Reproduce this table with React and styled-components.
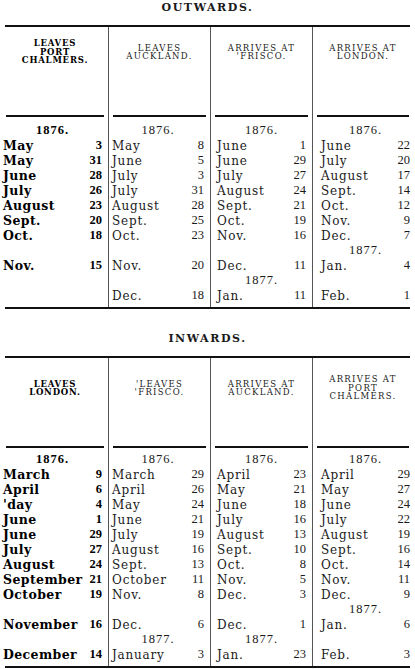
import styled, { createGlobalStyle } from 'styled-components';

// sailing tables, 1876-77 (newspaper scan)

const Y = (year) => ({ year });

const outwards = {
  title: 'OUTWARDS.',
  top: 0,
  headPad: 10,
  bodyPad: 6,
  heads: [
    ['LEAVES', 'PORT', 'CHALMERS.'],
    ['LEAVES', 'AUCKLAND.'],
    ['ARRIVES AT', "'FRISCO."],
    ['ARRIVES AT', 'LONDON.'],
  ],
  cols: [
    [Y('1876.'), ['May', '3'], ['May', '31'], ['June', '28'], ['July', '26'], ['August', '23'], ['Sept.', '20'], ['Oct.', '18'], null, ['Nov.', '15'], null, null],
    [Y('1876.'), ['May', '8'], ['June', '5'], ['July', '3'], ['July', '31'], ['August', '28'], ['Sept.', '25'], ['Oct.', '23'], null, ['Nov.', '20'], null, ['Dec.', '18']],
    [Y('1876.'), ['June', '1'], ['June', '29'], ['July', '27'], ['August', '24'], ['Sept.', '21'], ['Oct.', '19'], ['Nov.', '16'], null, ['Dec.', '11'], Y('1877.'), ['Jan.', '11']],
    [Y('1876.'), ['June', '22'], ['July', '20'], ['August', '17'], ['Sept.', '14'], ['Oct.', '12'], ['Nov.', '9'], ['Dec.', '7'], Y('1877.'), ['Jan.', '4'], null, ['Feb.', '1']],
  ],
};

const inwards = {
  title: 'INWARDS.',
  top: 22,
  headPad: 15,
  bodyPad: 4,
  heads: [
    ['LEAVES', 'LONDON.'],
    ["'LEAVES", "'FRISCO."],
    ['ARRIVES AT', 'AUCKLAND.'],
    ['ARRIVES AT', 'PORT', 'CHALMERS.'],
  ],
  cols: [
    [Y('1876.'), ['March', '9'], ['April', '6'], ["'day", '4'], ['June', '1'], ['June', '29'], ['July', '27'], ['August', '24'], ['September', '21'], ['October', '19'], null, ['November', '16'], null, ['December', '14']],
    [Y('1876.'), ['March', '29'], ['April', '26'], ['May', '24'], ['June', '21'], ['July', '19'], ['August', '16'], ['Sept.', '13'], ['October', '11'], ['Nov.', '8'], null, ['Dec.', '6'], Y('1877.'), ['January', '3']],
    [Y('1876.'), ['April', '23'], ['May', '21'], ['June', '18'], ['July', '16'], ['August', '13'], ['Sept.', '10'], ['Oct.', '8'], ['Nov.', '5'], ['Dec.', '3'], null, ['Dec.', '1'], Y('1877.'), ['Jan.', '23']],
    [Y('1876.'), ['April', '29'], ['May', '27'], ['June', '24'], ['July', '22'], ['August', '19'], ['Sept.', '16'], ['Oct.', '14'], ['Nov.', '11'], ['Dec.', '9'], Y('1877.'), ['Jan.', '6'], null, ['Feb.', '3']],
  ],
};

// padding left / right of the figures in each column
const colPad = [
  [1, 6],
  [3, 6],
  [6, 6],
  [8, 3],
];

const Sailings = ({ data }) => (
  <Section $top={data.top}>
    <Title>{data.title}</Title>
    <Rule />
    <Table>
      {data.cols.map((lines, i) => (
        <Column key={i} $first={i === 0}>
          <Head $pad={data.headPad}>
            <HeadBox>
              {data.heads[i].map((h) => (
                <HeadLine key={h} $bold={i === 0}>{h}</HeadLine>
              ))}
            </HeadBox>
          </Head>
          <HeadRule />
          <Body $top={data.bodyPad} $left={colPad[i][0]} $right={colPad[i][1]}>
            {lines.map((l, j) => {
              if (!l) return <Line key={j} />;
              if (l.year) return <Year key={j} $bold={i === 0}>{l.year}</Year>;
              return (
                <Line key={j}>
                  <Month $bold={i === 0}>{l[0]}</Month>
                  <Day $bold={i === 0}>{l[1]}</Day>
                </Line>
              );
            })}
          </Body>
        </Column>
      ))}
    </Table>
    <Rule />
  </Section>
);

export default function App() {
  return (
    <>
      <GlobalStyle />
      <Page>
        <Sailings data={outwards} />
        <Sailings data={inwards} />
      </Page>
    </>
  );
}

const GlobalStyle = createGlobalStyle`
  *, *::before, *::after { box-sizing: border-box; }
  html, body {
    margin: 0;
    padding: 0;
    background: #fff;
  }
  body {
    width: 415px;
    height: 669px;
    overflow: hidden;
    font-family: 'DejaVu Serif', 'Liberation Serif', serif;
    color: #111;
  }
`

const Page = styled.div`
  display: flex;
  flex-direction: column;
  padding: 0 2px;
`

const Section = styled.section`
  display: flex;
  flex-direction: column;
  margin-top: ${(p) => p.$top}px;
`

const Title = styled.h2`
  margin: 0 0 9px;
  height: 16px;
  line-height: 16px;
  text-align: center;
  font-size: 11px;
  font-weight: bold;
  letter-spacing: 1.6px;
  color: #1a1a1a;
`

const Rule = styled.div`
  height: 2px;
  margin: 0 3px;
  background: #111;
`

const Table = styled.div`
  display: grid;
  grid-template-columns: 106px 102px 102px 101px;
`

const Column = styled.div`
  display: flex;
  flex-direction: column;
  border-left: ${(p) => (p.$first ? 'none' : '1px solid #555')};
`

const Head = styled.div`
  height: 88px;
  padding-top: ${(p) => p.$pad}px;
`

const HeadBox = styled.div`
  height: 30px;
  display: flex;
  flex-direction: column;
  justify-content: center;
  align-items: center;
`

const HeadLine = styled.span`
  font-size: 8.5px;
  line-height: 8.5px;
  white-space: nowrap;
  font-weight: ${(p) => (p.$bold ? 'bold' : 'normal')};
  letter-spacing: ${(p) => (p.$bold ? '0.8px' : '1.3px')};
  color: ${(p) => (p.$bold ? '#000' : '#1a1a1a')};
`

const HeadRule = styled.div`
  height: 2px;
  margin: 0 4px;
  background: #111;
`

const Body = styled.div`
  display: flex;
  flex-direction: column;
  padding: ${(p) => p.$top}px ${(p) => p.$right}px 4px ${(p) => p.$left}px;
`

const Line = styled.div`
  height: 15px;
  display: flex;
  align-items: center;
  justify-content: space-between;
  white-space: nowrap;
`

const Year = styled(Line)`
  justify-content: center;
  font-family: 'Liberation Serif', serif;
  font-size: 12.5px;
  letter-spacing: 1px;
  font-weight: ${(p) => (p.$bold ? 'bold' : 'normal')};
  color: ${(p) => (p.$bold ? '#000' : '#1a1a1a')};
`

const Month = styled.span`
  font-size: ${(p) => (p.$bold ? '12.5px' : '12px')};
  font-weight: ${(p) => (p.$bold ? 'bold' : 'normal')};
  letter-spacing: ${(p) => (p.$bold ? '0.4px' : '0.8px')};
  color: ${(p) => (p.$bold ? '#000' : '#1a1a1a')};
`

const Day = styled.span`
  font-family: 'Liberation Serif', serif;
  font-size: 12.5px;
  font-weight: ${(p) => (p.$bold ? 'bold' : 'normal')};
  color: ${(p) => (p.$bold ? '#000' : '#1a1a1a')};
`
